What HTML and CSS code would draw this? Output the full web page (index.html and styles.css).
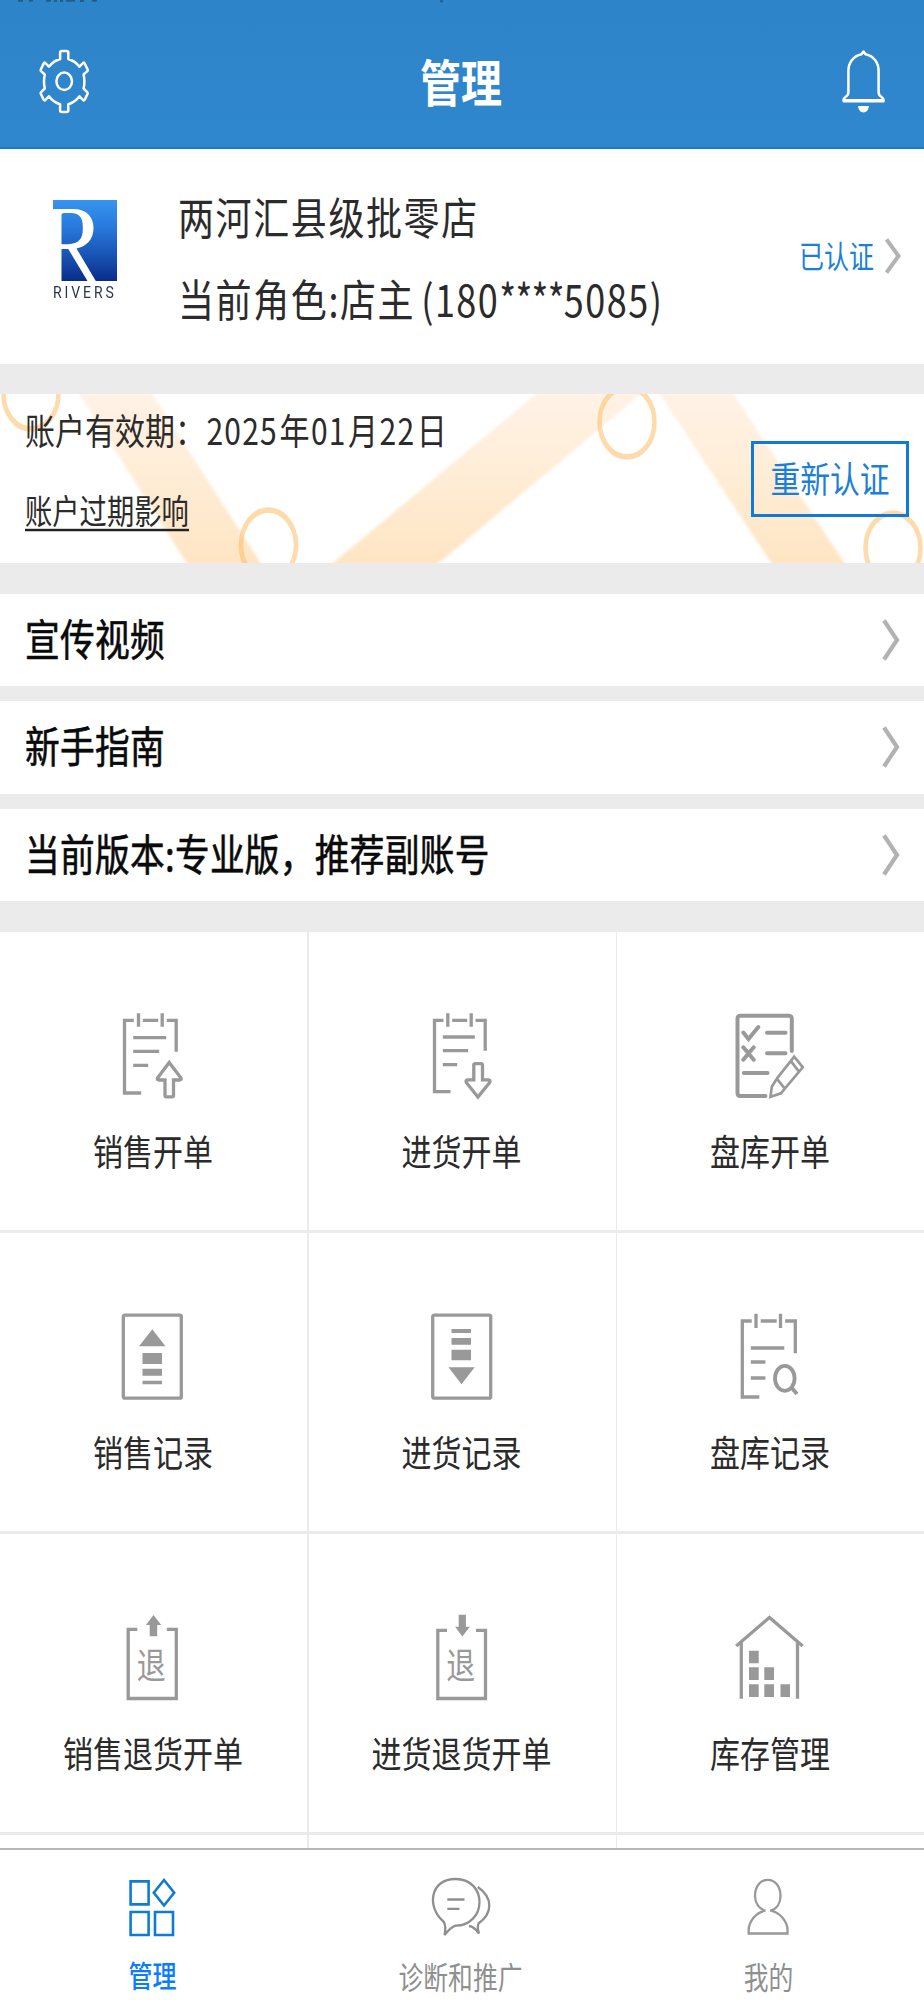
FILE: index.html
```html
<!DOCTYPE html>
<html lang="zh-CN">
<head>
<meta charset="utf-8">
<title>管理</title>
<link rel="stylesheet" href="styles.css">
</head>
<body>
<div class="app">
  <header class="header">
    <svg class="status-trace" width="924" height="3" viewBox="0 0 924 3"><path d="M18 .8h5M29 .8h4M46 .8h5M54 1h3M60 1h3M66 .8h9M80 1h4M92 .8h5M440 1.2h3" stroke="#1d4c75" stroke-width="2" fill="none"/></svg>
    <svg class="gear" width="50" height="66" viewBox="0 0 50 66" fill="none" stroke="#fff" stroke-width="2.5" stroke-linejoin="round"><path d="M21.1 10V3.5Q21.1 2 23 2H27.4Q29.3 2 29.3 3.5V10Q36 12 40.5 17.7L44 14Q45.2 13 45.8 14.6L48.6 20.5Q49 21.6 48 22.4L44.6 25.5Q46.2 32.5 44.6 39.5L48 42.8Q49 43.8 48.6 44.8L45.8 50.6Q45.2 52 44 51L40.5 47.3Q36 53.4 29.3 55.2V61.5Q29.3 63 27.4 63H23Q21.1 63 21.1 61.5V55.2Q14.4 53.4 9.9 47.3L6.4 51Q5.2 52 4.6 50.6L1.8 44.8Q1.4 43.8 2.4 42.8L5.8 39.5Q4.2 32.5 5.8 25.5L2.4 22.4Q1.4 21.6 1.8 20.5L4.6 14.6Q5.2 13 6.4 14L9.9 17.7Q14.4 12 21.1 10Z"/><ellipse cx="25.2" cy="32.3" rx="7.8" ry="8.8"/></svg>
    <h1 class="title"><span class="tall">管理</span></h1>
    <svg class="bell" width="44" height="66" viewBox="0 0 44 66" fill="none" stroke="#fff" stroke-width="2.5" stroke-linejoin="round"><path d="M19.5 5.2L21.5 2.5L23.500 5.2C32 7 36.600 14 36.600 22V43Q36.600 46 39 47.500Q42 49.500 41.500 52.200H1.700Q1 49.500 4 47.500Q6.400 46 6.400 43V22C6.400 14 11 7 19.500 5.200Z"/><path d="M2 51.600H41" stroke-width="3"/><path d="M16 57H27Q26 63.500 21.500 63.500Q17 63.500 16 57Z" fill="#fff" stroke="none"/></svg>
  </header>

  <section class="profile">
    <div class="logo">
      <svg width="64" height="81" viewBox="0 0 64 81"><defs><linearGradient id="lg" x1="0" y1="0" x2="0" y2="1"><stop offset="0" stop-color="#3695ee"/><stop offset=".35" stop-color="#2877dc"/><stop offset=".75" stop-color="#154cab"/><stop offset="1" stop-color="#092c8a"/></linearGradient></defs><rect width="64" height="81" fill="url(#lg)"/><path fill="#fff" fill-rule="evenodd" d="M0 9H20C34 9 40.500 17 40.500 28C40.500 40 33 46.500 23.500 48.500L42.800 81H34.500L15.300 49H8.500V81H0ZM8.500 14.500V44.300H15C26 43.500 29.800 39 29.800 29V26C29.800 17 25.500 13 18 13H11Q8.500 13 8.500 14.500Z"/></svg>
      <span class="logo-name">RIVERS</span>
    </div>
    <div class="who">
      <div class="who-line"><span class="tall">两河汇县级批零店</span></div>
      <div class="who-line"><span class="tall">当前角色:店主<span class="phone">(180<span class="stars">****</span>5085)</span></span></div>
    </div>
    <div class="verified"><span class="tall">已认证</span><svg width="16" height="36" viewBox="0 0 16 36"><path d="M1.500 1.500L13.500 18L1.500 34.500" fill="none" stroke="#b2b2b2" stroke-width="4"/></svg></div>
  </section>

  <section class="banner">
    <svg class="banner-bg" width="924" height="169" viewBox="0 0 924 169">
      <defs><linearGradient id="bg" x1="0" y1="0" x2="0" y2="169" gradientUnits="userSpaceOnUse"><stop offset="0" stop-color="#fff3e6"/><stop offset="1" stop-color="#fee5c4"/></linearGradient><filter id="soft"><feGaussianBlur stdDeviation="1.500"/></filter></defs>
      <g fill="url(#bg)" filter="url(#soft)"><path d="M73 -10H146L267 179H193Z"/><path d="M548 -10H653L427 179H321Z"/><path d="M653 -10H727L851 179H778Z"/></g>
      <g fill="none" stroke="#fdb75c" stroke-opacity=".5" stroke-width="4.600"><circle r="27.500" transform="translate(31 0) scale(1 1.270)"/><circle r="27.500" transform="translate(268.500 151) scale(1 1.270)"/><circle r="27.500" transform="translate(627 28) scale(1 1.270)"/><circle r="27.500" transform="translate(893 154) scale(1 1.270)"/></g>
    </svg>
    <div class="banner-text">
      <div class="expiry"><span class="tall">账户有效期：<span class="num">2025</span>年<span class="num">01</span>月<span class="num">22</span>日</span></div>
      <div class="effect"><span class="tall">账户过期影响</span></div>
    </div>
    <div class="renew"><span class="tall">重新认证</span></div>
  </section>

  <nav class="rows">
    <div class="row"><span class="tall">宣传视频</span><svg width="18" height="42" viewBox="0 0 18 42"><path d="M2 1.500L15 21L2 40.500" fill="none" stroke="#b2b2b2" stroke-width="4.200"/></svg></div>
    <div class="row"><span class="tall">新手指南</span><svg width="18" height="42" viewBox="0 0 18 42"><path d="M2 1.500L15 21L2 40.500" fill="none" stroke="#b2b2b2" stroke-width="4.200"/></svg></div>
    <div class="row"><span class="tall">当前版本:专业版，推荐副账号</span><svg width="18" height="42" viewBox="0 0 18 42"><path d="M2 1.500L15 21L2 40.500" fill="none" stroke="#b2b2b2" stroke-width="4.200"/></svg></div>
  </nav>

  <main class="grid">
    <div class="cell"><svg class="ico" viewBox="0 0 70 88"><path d="M15.800 8.300H6.500V81H23.200M24.800 8.300H40.200M48.800 8.300H58.200V39.700M20.500 1.300V14.700M44.200 1.300V14.700M15.200 25.700H48.200M15.200 39.300H41.200M15.200 53.300H30.200M51.200 50.500L39.500 66Q38.800 68 41 68H47V83.500Q47 84.800 48.500 84.800H54Q55.500 84.800 55.500 83.500V68H61.500Q63.700 68 63 66Z"/></svg><div class="label"><span class="tall">销售开单</span></div></div>
    <div class="cell"><svg class="ico" viewBox="0 0 70 88"><path d="M16.500 8.300H7.500V79.700H23.500M25.200 8.300H40.200M48.500 8.300H58.200V38.700M20.800 1.300V14.700M44.200 1.300V14.700M15.800 25H47.800M15.800 38.700H41.200M15.800 52.700H30.200M50.900 85L39.300 70.500Q38.500 67.800 41 67.800H46.800V53Q46.800 51.700 48.300 51.700H54Q55.500 51.700 55.500 53V67.800H61Q63.500 67.800 62.700 70.500Z"/></svg><div class="label"><span class="tall">进货开单</span></div></div>
    <div class="cell"><svg class="ico" viewBox="0 0 70 88"><g stroke-width="4" stroke-linecap="round"><path d="M56.800 39V7Q56.800 3.700 54 3.700H5.500Q2.500 3.700 2.500 7V81Q2.500 84 5.500 84H30.500M8.300 20.500L13.500 27L23.300 15M32 20.700H50.500M32 41.300H50.500M8.300 35.300L18.700 47.700M18.700 35.300L8.300 47.700M8.800 61H32.500"/></g><path stroke-width="2.700" d="M41.800 66.700L59.200 44.700L67.800 55.300L49.800 76.700L46 81.300L35.500 84.700L36.800 74.700ZM41.800 66.700L49.800 76.700M55.500 48.700L63.800 59.300"/></svg><div class="label"><span class="tall">盘库开单</span></div></div>

    <div class="cell"><svg class="ico" viewBox="0 0 70 88"><rect x="5.300" y="2.200" width="58" height="83" rx="1.500"/><path class="solid" d="M34.300 16.300L47.500 33.300H21ZM24.500 40H44V51H24.500ZM24.500 55.700H44V62.700H24.500ZM24.500 67.700H44V71.300H24.500Z"/></svg><div class="label"><span class="tall">销售记录</span></div></div>
    <div class="cell"><svg class="ico" viewBox="0 0 70 88"><rect x="5.700" y="2.200" width="58" height="83" rx="1.500"/><path class="solid" d="M24.500 16H44V20H24.500ZM24.500 25H44V31.700H24.500ZM24.500 36.700H44V47.300H24.500ZM21.500 54.300H47.700L34.500 71.300Z"/></svg><div class="label"><span class="tall">进货记录</span></div></div>
    <div class="cell"><svg class="ico" viewBox="0 0 70 88"><path d="M16.700 8H7.300V84H24.300M25.700 8H41.700M50.200 8H60.300V40.300M21 .7V15M45.500 .7V15M15.800 35H49.300M15.800 49H30.400M15.800 65H30.400"/><ellipse cx="49.800" cy="65.300" rx="9.800" ry="12.500" stroke-width="3.800"/><path d="M56 74L62 81" stroke-width="3.800"/></svg><div class="label"><span class="tall">盘库记录</span></div></div>

    <div class="cell"><svg class="ico" viewBox="0 0 70 88"><path d="M19.300 15.300H10.200V84.500H58.300V15.300H48.800"/><path class="solid" d="M35.500 1L43.200 11H39.200V22.300H31.700V11H27.900Z"/><text class="tui" transform="translate(33.300 65) scale(1 1.250)">退</text></svg><div class="label"><span class="tall">销售退货开单</span></div></div>
    <div class="cell"><svg class="ico" viewBox="0 0 70 88"><path d="M20 16.300H10.800V84.500H58.500V16.300H49"/><path class="solid" d="M31.700 .7H38.900V12.700H42.900L35.300 22.500L28.100 12.700H31.700Z"/><text class="tui" transform="translate(33.700 65) scale(1 1.250)">退</text></svg><div class="label"><span class="tall">进货退货开单</span></div></div>
    <div class="cell"><svg class="ico" viewBox="0 0 70 88"><path d="M1.200 32L34.400 3.500L67.600 32M6.300 28V84.700M62.500 28V84.700"/><path class="solid" d="M14 36.700H23.700V49.300H14ZM14 53.300H23.700V66H14ZM14 70.300H23.700V83H14ZM29.300 53.300H39V66H29.300ZM29.300 70.300H39V83H29.300ZM45.500 70.300H55V83H45.500Z"/></svg><div class="label"><span class="tall">库存管理</span></div></div>

    <div class="cell stub"></div><div class="cell stub"></div><div class="cell stub"></div>
  </main>

  <footer class="tabs">
    <div class="tab active"><svg width="50" height="64" viewBox="0 0 50 64" fill="none" stroke="#107bd3" stroke-width="2.600"><path d="M2.600 4.400H20.600V27.400H2.600ZM2.600 35H20.600V58H2.600ZM27 35H45V58H27ZM36 3L46.200 15.700L36 28.500L25.800 15.700Z"/></svg><span class="tall">管理</span></div>
    <div class="tab"><svg width="62" height="64" viewBox="0 0 62 64" fill="none" stroke="#8f8f8f" stroke-width="2.300"><path d="M13.500 44.500C-3 31 -1 2 25.700 2C42 2 49.500 14 49.500 25C49.500 38 40 48.500 25.700 48.700Q21 50 14.500 58Q16.500 49 13.500 44.500ZM17.300 22.500H34.500M17.300 31.800H29.500M47.800 10C55 15 59.300 21 59.300 28.500C59.300 36 54 42.500 48.500 46.500Q47 51 49 56.500Q44 49.500 39 49"/></svg><span class="tall">诊断和推广</span></div>
    <div class="tab me"><svg width="44" height="62" viewBox="0 0 44 62" fill="none" stroke="#999" stroke-width="2.300"><path d="M18.500 33.700C12 32 8 26 8 19C8 9 13.500 2.800 20.800 2.800C28 2.800 33.500 9 33.500 19C33.500 26 30 32 23.300 33.700C33 35 40.500 45 40.500 53V56.500H1.700V53C1.700 45 9 35 18.500 33.700"/></svg><span class="tall">我的</span></div>
  </footer>
</div>
</body>
</html>
```

FILE: styles.css
```css
* { box-sizing: border-box; }
body {
  margin: 0;
  background: #ebebeb;
  color: #2b2b2b;
  font-family: "Noto Sans CJK SC", "Noto Sans", sans-serif;
}
svg { display: block; flex: none; }
.app { width: 924px; height: 2000px; overflow: hidden; display: flex; flex-direction: column; }
/* Labels are drawn taller than wide, raised to sit on the optical centre of their line */
.tall { display: inline-block; white-space: nowrap; transform: translateY(-2px) scaleY(1.23); }

.header {
  position: relative;
  flex: none;
  height: 149px;
  padding: 16px 38px 0 39px;
  display: flex;
  align-items: center;
  justify-content: space-between;
  background: linear-gradient(#2e84c8, #2f87ce);
  border-bottom: 2px solid #1b7ac6;
}
.status-trace { position: absolute; left: 0; top: 0; opacity: .7; }
.title { margin: 0; padding-right: 9px; font-size: 41px; line-height: 60px; font-weight: 700; color: #fff; }

.profile { flex: none; height: 215px; background: #fff; display: flex; padding-right: 23px; }
.logo { width: 126px; padding: 51px 0 0 53px; }
.logo-name {
  display: block;
  width: max-content;
  margin-top: 4px;
  font: 14px/14px Roboto, "Liberation Sans", sans-serif;
  letter-spacing: 2.900px;
  color: #2a3350;
  transform: scaleY(1.200);
}
.who { flex: 1; padding: 40px 0 0 52px; font-size: 36px; letter-spacing: 1.600px; }
.who-line { height: 82px; line-height: 56px; }
.phone { margin-left: 6px; letter-spacing: 1.500px; }
.stars { letter-spacing: -.700px; }
.verified { display: flex; align-items: center; gap: 10px; margin-top: 1px; height: 212px; font-size: 25px; color: #1a80d6; }
.verified .tall { margin-right: 1px; }

.banner {
  position: relative;
  flex: none;
  height: 169px;
  margin-top: 30px;
  padding: 0 15px 0 25px;
  background: #fff;
  display: flex;
  align-items: flex-start;
  justify-content: space-between;
}
.banner-bg { position: absolute; left: 0; top: 0; }
.banner-text, .renew { position: relative; }
.expiry { margin-top: 15px; font-size: 30px; line-height: 44px; }
.num { letter-spacing: 1.200px; margin: 0 1.500px; }
.effect { margin-top: 36px; font-size: 27.300px; line-height: 44px; }
.effect .tall { height: 37px; border-bottom: 2px solid #222; line-height: 39px; }
.renew {
  width: 158px;
  height: 76px;
  margin-top: 47px;
  border: 3px solid #107bd6;
  color: #1a80d6;
  font-size: 29.800px;
  line-height: 70px;
  text-align: center;
}

.rows { flex: none; margin-top: 31px; display: flex; flex-direction: column; gap: 15px; }
.row {
  height: 92.300px;
  padding: 0 24px 0 25px;
  display: flex;
  align-items: center;
  justify-content: space-between;
  background: #fff;
  color: #0a0a0a;
  font-size: 34.700px;
  letter-spacing: .300px;
  -webkit-text-stroke: .500px currentColor;
}

.grid {
  flex: none;
  margin-top: 31px;
  height: 916px;
  overflow: hidden;
  display: grid;
  grid-template-columns: 307px 307px 307px;
  grid-template-rows: 298px 298px 298px 14px;
  column-gap: 1.500px;
  row-gap: 3px;
  background: #ebebeb;
}
.cell { background: #fff; padding-top: 80px; padding-right: 1px; display: flex; flex-direction: column; align-items: center; }
.cell.stub { padding: 0; }
.ico { width: 70px; height: 88px; fill: none; stroke: #999; stroke-width: 3.300; }
.solid { fill: #999; stroke: none; }
.tui { font-size: 29px; fill: #999; stroke: none; text-anchor: middle; }
.label { margin-top: 30px; font-size: 30px; line-height: 44px; }

.tabs {
  flex: 1;
  border-top: 2px solid #b8b8b8;
  background: #fff;
  display: grid;
  grid-template-columns: repeat(3, 1fr);
  padding-right: 3px;
}
.tab { display: flex; flex-direction: column; align-items: center; padding-top: 27px; color: #8f8f8f; font-size: 24.800px; }
.tab .tall { line-height: 36px; margin-top: auto; margin-bottom: 5px; }
.active { padding-right: 2px; color: #0a7cff; font-size: 24px; font-weight: 500; }
.me { padding-left: 2px; }
```
